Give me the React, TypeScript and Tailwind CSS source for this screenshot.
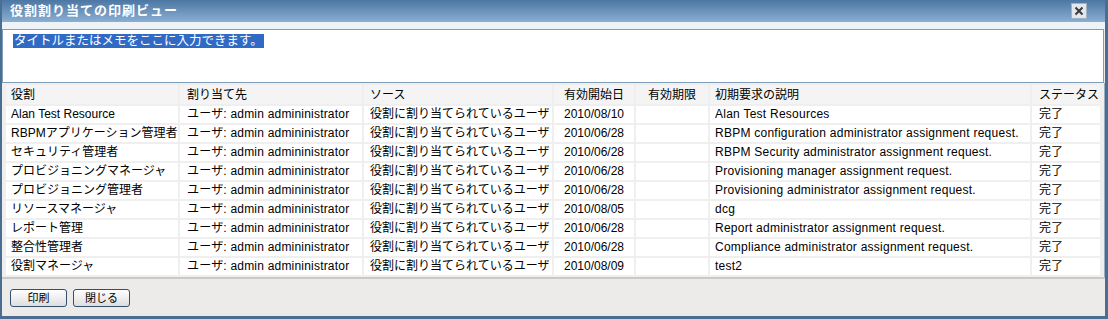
import React from "react";

type Row = { role: string; assignee: string; source: string; start: string; end: string; desc: string; status: string };

const rows: Row[] = [
  { role: "Alan Test Resource", assignee: "ユーザ: admin admininistrator", source: "役割に割り当てられているユーザ", start: "2010/08/10", end: "", desc: "Alan Test Resources", status: "完了" },
  { role: "RBPMアプリケーション管理者", assignee: "ユーザ: admin admininistrator", source: "役割に割り当てられているユーザ", start: "2010/06/28", end: "", desc: "RBPM configuration administrator assignment request.", status: "完了" },
  { role: "セキュリティ管理者", assignee: "ユーザ: admin admininistrator", source: "役割に割り当てられているユーザ", start: "2010/06/28", end: "", desc: "RBPM Security administrator assignment request.", status: "完了" },
  { role: "プロビジョニングマネージャ", assignee: "ユーザ: admin admininistrator", source: "役割に割り当てられているユーザ", start: "2010/06/28", end: "", desc: "Provisioning manager assignment request.", status: "完了" },
  { role: "プロビジョニング管理者", assignee: "ユーザ: admin admininistrator", source: "役割に割り当てられているユーザ", start: "2010/06/28", end: "", desc: "Provisioning administrator assignment request.", status: "完了" },
  { role: "リソースマネージャ", assignee: "ユーザ: admin admininistrator", source: "役割に割り当てられているユーザ", start: "2010/08/05", end: "", desc: "dcg", status: "完了" },
  { role: "レポート管理", assignee: "ユーザ: admin admininistrator", source: "役割に割り当てられているユーザ", start: "2010/06/28", end: "", desc: "Report administrator assignment request.", status: "完了" },
  { role: "整合性管理者", assignee: "ユーザ: admin admininistrator", source: "役割に割り当てられているユーザ", start: "2010/06/28", end: "", desc: "Compliance administrator assignment request.", status: "完了" },
  { role: "役割マネージャ", assignee: "ユーザ: admin admininistrator", source: "役割に割り当てられているユーザ", start: "2010/08/09", end: "", desc: "test2", status: "完了" },
];

const font = { fontFamily: '"Liberation Sans", "Noto Sans CJK JP", sans-serif' };

export default function App() {
  return (
    <div style={font} className="w-[1108px] h-[319px] flex flex-col bg-[#ecebea] border-l-2 border-r-[3px] border-b-[3px] border-[#4a6d92] text-[12px] text-black overflow-hidden">
      {/* title bar */}
      <div className="h-[22px] shrink-0 flex items-center justify-between pl-[8px] pr-[18px] bg-gradient-to-b from-[#4c77a3] to-[#8bafd2]">
        <span className="text-white font-bold text-[13px] tracking-[1px]">役割割り当ての印刷ビュー</span>
        <div className="w-[16px] h-[16px] bg-[#e3e7ec] border border-[#9fb3c8] flex items-center justify-center">
          <svg width="10" height="10" viewBox="0 0 10 10">
            <path d="M1.5 1.5 L8.5 8.5 M8.5 1.5 L1.5 8.5" stroke="#3a3a3a" strokeWidth="2" />
          </svg>
        </div>
      </div>
      <div className="h-[7px] shrink-0 bg-[#eef3f8]" />

      {/* memo area */}
      <div className="h-[54px] shrink-0 mr-[1px] bg-white border border-[#7f9db9] pl-[10px] pt-[2px]">
        <span className="bg-[#316ac5] text-white text-[12.5px] leading-[16px] px-[1px]">タイトルまたはメモをここに入力できます。</span>
      </div>

      {/* table */}
      <div className="shrink-0 bg-[#efefef] pl-[2px] border-r border-[#9aaec4]">
        <table className="border-separate border-spacing-[2px] table-fixed w-[1098px]">
          <colgroup>
            <col className="w-[172px]" />
            <col className="w-[182px]" />
            <col className="w-[188px]" />
            <col className="w-[80px]" />
            <col className="w-[72px]" />
            <col className="w-[320px]" />
            <col className="w-[68px]" />
          </colgroup>
          <thead>
            <tr className="h-[19px] bg-[#f4f4f4] whitespace-nowrap">
              <th className="font-normal text-left pl-[5px]">役割</th>
              <th className="font-normal text-left pl-[7px]">割り当て先</th>
              <th className="font-normal text-left pl-[6px]">ソース</th>
              <th className="font-normal text-center">有効開始日</th>
              <th className="font-normal text-center">有効期限</th>
              <th className="font-normal text-left pl-[5px]">初期要求の説明</th>
              <th className="font-normal text-left pl-[7px]">ステータス</th>
            </tr>
          </thead>
          <tbody>
            {rows.map((r, i) => (
              <tr key={i} className="h-[17px] leading-[17px] whitespace-nowrap">
                <td className="bg-white pl-[5px]">{r.role}</td>
                <td className="bg-white pl-[7px] tracking-[0.2px]">{r.assignee}</td>
                <td className="bg-white pl-[6px]">{r.source}</td>
                <td className="bg-white text-center">{r.start}</td>
                <td className="bg-white text-center">{r.end}</td>
                <td className="bg-white pl-[5px] tracking-[0.25px]">{r.desc}</td>
                <td className="bg-white pl-[7px]">{r.status}</td>
              </tr>
            ))}
          </tbody>
        </table>
      </div>

      {/* footer */}
      <div className="flex-1 border-t-2 border-[#c9c9c9] flex items-start gap-[6px] pl-[8px] pt-[10px]">
        <button className="w-[57px] h-[18px] rounded-[3px] border border-[#33506f] bg-gradient-to-b from-white to-[#dedede] text-[11px] leading-none">印刷</button>
        <button className="w-[57px] h-[18px] rounded-[3px] border border-[#33506f] bg-gradient-to-b from-white to-[#dedede] text-[11px] leading-none">閉じる</button>
      </div>
    </div>
  );
}
